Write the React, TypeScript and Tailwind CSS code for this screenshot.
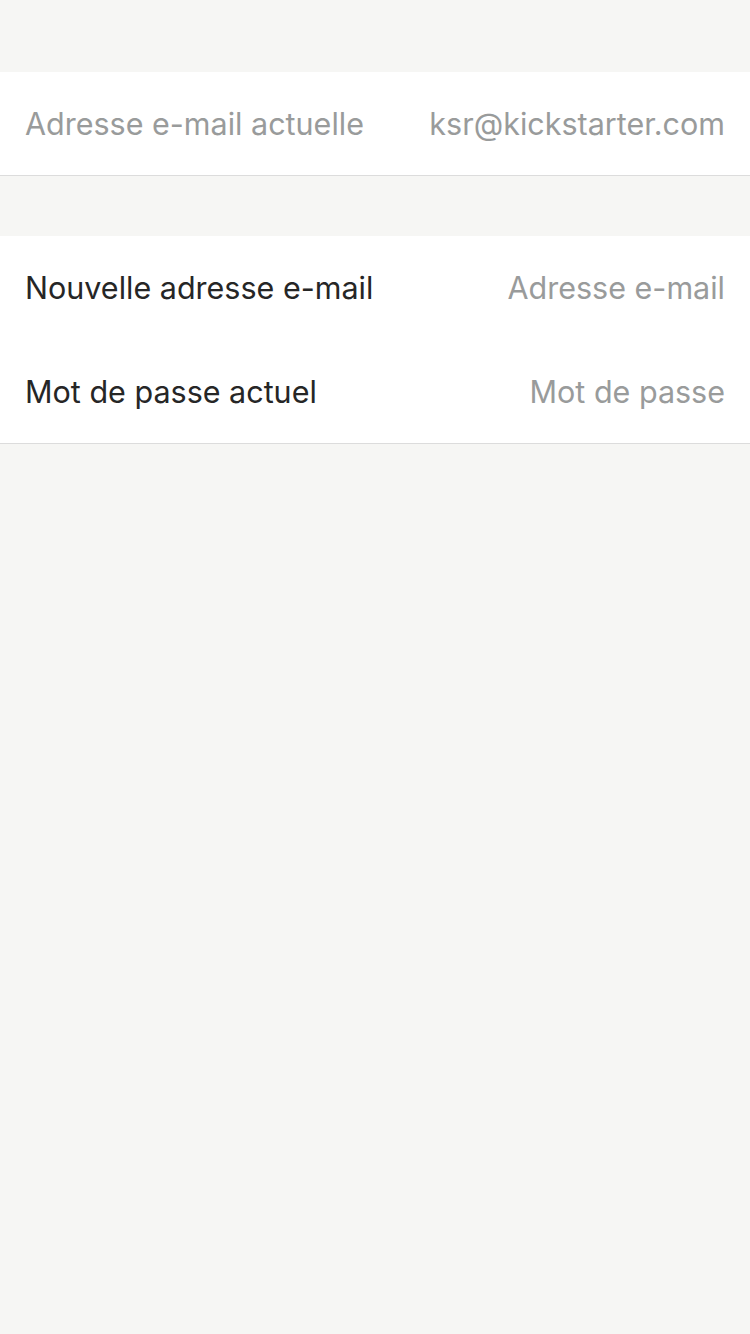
export default function App() {
  return (
    <div className="min-h-[1334px] w-full bg-[#f6f6f4] font-['Inter','Noto_Sans',sans-serif] text-[30.5px]">
      <div className="h-[72px]" />

      {/* Current email */}
      <div className="bg-white border-b border-[#dcdcdc]">
        <div className="flex h-[103px] items-center justify-between px-[25px]">
          <span className="text-[#999b9b]">Adresse e-mail actuelle</span>
          <span className="text-[#999b9b]">ksr@kickstarter.com</span>
        </div>
      </div>

      <div className="h-[60px]" />

      {/* New email form */}
      <div className="bg-white border-b border-[#dcdcdc]">
        <div className="flex h-[104px] items-center justify-between px-[25px]">
          <span className="text-[#262626]">Nouvelle adresse e-mail</span>
          <span className="text-[#999b9b]">Adresse e-mail</span>
        </div>
        <div className="flex h-[103px] items-center justify-between px-[25px]">
          <span className="text-[#262626]">Mot de passe actuel</span>
          <span className="text-[#999b9b]">Mot de passe</span>
        </div>
      </div>
    </div>
  );
}
